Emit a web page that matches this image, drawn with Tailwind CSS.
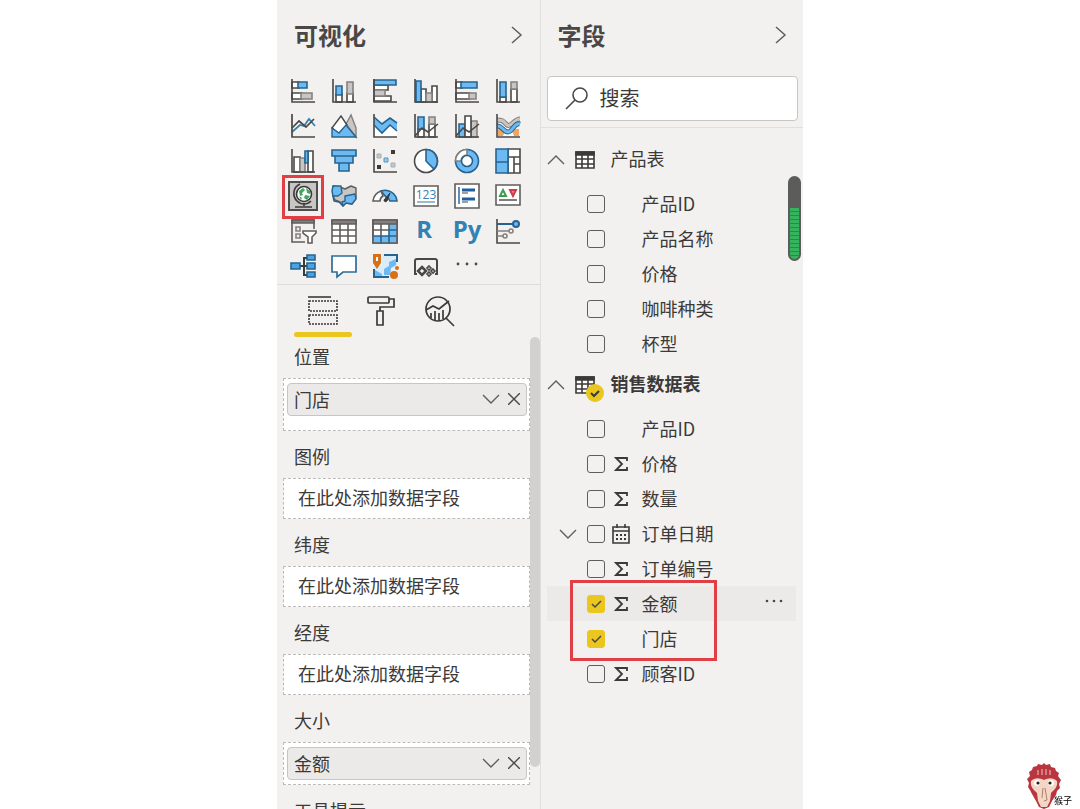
<!DOCTYPE html>
<html lang="zh-CN">
<head>
    <meta charset="UTF-8">
    <meta name="viewport" content="width=device-width, initial-scale=1.0">
    <title>可视化 / 字段</title>

    <!-- Tailwind CSS for styling -->
    <script src="https://cdn.jsdelivr.net/npm/@tailwindcss/browser@4"></script>
</head>
<body class="bg-white font-['Noto_Sans_CJK_SC',sans-serif] text-lg text-[#3b3a39]">

    <div class="mx-auto flex h-screen max-w-[526px] overflow-hidden bg-[#f2f1f0]">

        <!-- Visualizations pane -->
        <section class="flex flex-1 flex-col border-r border-[#e0dfde]">
            <header class="flex h-[73px] shrink-0 items-center justify-between pr-[17px] pb-1 pl-[17px]">
                <h1 class="text-2xl font-bold text-[#4a4846]">可视化</h1>
                <button aria-label="折叠可视化">
                    <svg class="h-5 w-3" viewBox="0 0 12 20" fill="none" stroke="#605e5c" stroke-width="1.5"><path d="M1 2l9 8-9 8"/></svg>
                </button>
            </header>

            <!-- Chart type gallery -->
            <div class="grid shrink-0 auto-rows-[35px] grid-cols-6 place-items-center border-b border-[#dddcdb] pr-[11px] pl-[6px] pb-px">
                <button aria-label="堆积条形图">
                    <svg class="size-6 overflow-visible" viewBox="0 0 24 24" fill="#fff" stroke="#4a4846" stroke-width="1.6">
                        <path d="M1 3h7v6H1zM1 14h10v6H1z"/><path fill="#6db9f2" stroke="#26648f" d="M7 3h9v6H7z"/><path fill="#c8c6c4" stroke="#85807d" d="M10 14h11v6H10z"/><path fill="none" d="M1 0v23h23"/>
                    </svg>
                </button>
                <button aria-label="堆积柱形图">
                    <svg class="size-6 overflow-visible" viewBox="0 0 24 24" fill="#fff" stroke="#4a4846" stroke-width="1.6">
                        <path d="M4 15h6v8H4zM15 14h6v9h-6z"/><path fill="#6db9f2" stroke="#26648f" d="M4 7h6v9H4z"/><path fill="#c8c6c4" stroke="#85807d" d="M15 3h6v12h-6z"/><path fill="none" d="M1 0v23h23"/>
                    </svg>
                </button>
                <button aria-label="簇状条形图">
                    <svg class="size-6 overflow-visible" viewBox="0 0 24 24" fill="#fff" stroke="#4a4846" stroke-width="1.6">
                        <path d="M1 6h14v5H1zM1 17h17v5H1z"/><path fill="#c8c6c4" stroke="#85807d" d="M1 11h11v6H1z"/><path fill="#6db9f2" stroke="#26648f" d="M1 1h22v5H1z"/><path fill="none" d="M1 0v23h23"/>
                    </svg>
                </button>
                <button aria-label="簇状柱形图">
                    <svg class="size-6 overflow-visible" viewBox="0 0 24 24" fill="#fff" stroke="#4a4846" stroke-width="1.6">
                        <path d="M7 10h5v13H7zM18 7h5v16h-5z"/><path fill="#c8c6c4" stroke="#85807d" d="M12 14h6v9h-6z"/><path fill="#6db9f2" stroke="#26648f" d="M2 2h5v21H2z"/><path fill="none" d="M1 0v23h23"/>
                    </svg>
                </button>
                <button aria-label="百分比堆积条形图">
                    <svg class="size-6 overflow-visible" viewBox="0 0 24 24" fill="#fff" stroke="#4a4846" stroke-width="1.6">
                        <path d="M1 3h6v6H1zM1 14h14v6H1z"/><path fill="#6db9f2" stroke="#26648f" d="M6 3h16v6H6z"/><path fill="#c8c6c4" stroke="#85807d" d="M14 14h7v6h-7z"/><path fill="none" d="M1 0v23h23"/>
                    </svg>
                </button>
                <button aria-label="百分比堆积柱形图">
                    <svg class="size-6 overflow-visible" viewBox="0 0 24 24" fill="#fff" stroke="#4a4846" stroke-width="1.6">
                        <path d="M4 18h6v5H4zM15 10h6v13h-6z"/><path fill="#6db9f2" stroke="#26648f" d="M4 3h6v15H4z"/><path fill="#c8c6c4" stroke="#85807d" d="M15 3h6v7h-6z"/><path fill="none" d="M1 0v23h23"/>
                    </svg>
                </button>

                <button aria-label="折线图">
                    <svg class="size-6 overflow-visible" viewBox="0 0 24 24" fill="none" stroke="#4a4846" stroke-width="1.7">
                        <path stroke="#3480a8" d="M1 18l8-7 4 1 5-7 6 7"/><path d="M1 14l7-7 7 6 8-8"/><path d="M1 0v23h23"/>
                    </svg>
                </button>
                <button aria-label="分区图">
                    <svg class="size-6 overflow-visible" viewBox="0 0 24 24" stroke-width="1.4">
                        <path fill="#c8c6c4" stroke="#85807d" d="M14 10l5-9 5 13v9z"/><path fill="#fff" stroke="#4a4846" d="M0 14L9 2l6 9-8 9z"/><path fill="#6db9f2" stroke="#26648f" d="M0 14l7 5 7-8 10 12H0z"/>
                    </svg>
                </button>
                <button aria-label="堆积面积图">
                    <svg class="size-6 overflow-visible" viewBox="0 0 24 24" stroke-width="1.6">
                        <path fill="#fff" d="M1 11l8 8 8-8 7 6v6H1z"/><path fill="#6db9f2" d="M1 3l8 7 8-6 7 5v8l-7-6-8 8-8-8z"/><path fill="none" stroke="#26648f" d="M1 3l8 7 8-6 7 5M1 11l8 8 8-8 7 6"/><path fill="none" stroke="#4a4846" d="M1 0v23h23"/>
                    </svg>
                </button>
                <button aria-label="折线和堆积柱形图">
                    <svg class="size-6 overflow-visible" viewBox="0 0 24 24" fill="#fff" stroke="#4a4846" stroke-width="1.6">
                        <path d="M4 15h6v8H4zM15 10h6v13h-6z"/><path fill="#6db9f2" stroke="#26648f" d="M4 3h6v12H4z"/><path fill="#c8c6c4" stroke="#85807d" d="M15 3h6v7h-6z"/><path fill="none" d="M1 0v23h23M1 22l7-8 6 4 10-8"/>
                    </svg>
                </button>
                <button aria-label="折线和簇状柱形图">
                    <svg class="size-6 overflow-visible" viewBox="0 0 24 24" fill="#fff" stroke="#4a4846" stroke-width="1.6">
                        <path fill="#6db9f2" stroke="#26648f" d="M4 10h6v13H4z"/><path fill="#c8c6c4" stroke="#85807d" d="M16 7h6v16h-6z"/><path d="M10 2h6v21h-6z"/><path fill="none" d="M1 0v23h23M1 22l7-8 6 4 10-8"/>
                    </svg>
                </button>
                <button aria-label="功能区图表">
                    <svg class="size-6 overflow-visible" viewBox="0 0 24 24" fill="none">
                        <path fill="#f0a662" d="M2 15h21v7H2z"/><path fill="#fff" d="M7 22l3-7h5l3 7z"/>
                        <path stroke="#85807d" stroke-width="5" d="M1 6c6 0 6 1 10 5 4 3 7-6 13-6"/><path stroke="#c8c6c4" stroke-width="3" d="M1 6c6 0 6 1 10 5 4 3 7-6 13-6"/>
                        <path stroke="#26648f" stroke-width="5" d="M1 12c5-1 6 6 11 6s6-10 12-8"/><path stroke="#6db9f2" stroke-width="3" d="M1 12c5-1 6 6 11 6s6-10 12-8"/>
                        <path stroke="#4a4846" stroke-width="1.6" d="M1 0v23h23"/>
                    </svg>
                </button>

                <button aria-label="瀑布图">
                    <svg class="size-6 overflow-visible" viewBox="0 0 24 24" fill="#fff" stroke="#4a4846" stroke-width="1.6">
                        <path d="M3 8h6v15H3zM17 2h5v21h-5z"/><path fill="#c8c6c4" stroke="#85807d" d="M9 9h5v14H9z"/><path fill="#6db9f2" stroke="#26648f" d="M14 2h3v12h-3z"/><path fill="none" d="M1 0v23h23"/>
                    </svg>
                </button>
                <button aria-label="漏斗图">
                    <svg class="size-6 overflow-visible" viewBox="0 0 24 24" fill="#6db9f2" stroke="#26648f" stroke-width="1.6">
                        <path d="M0 1h24v6H0zM3 7h18v7H3zM7 14h10v8H7z"/>
                    </svg>
                </button>
                <button aria-label="散点图">
                    <svg class="size-6 overflow-visible" viewBox="0 0 24 24" stroke-width="1">
                        <path fill="#3b3a39" d="M18 1h4v4h-4zM4 16h4v4H4z"/><path fill="#c8c6c4" stroke="#a3b0bb" d="M4 5h4v4H4zM18 14h4v4h-4z"/><path fill="#9acbee" stroke="#5d92b8" d="M11 9h4v4h-4z"/><path fill="none" stroke="#4a4846" stroke-width="1.6" d="M1 0v23h23"/>
                    </svg>
                </button>
                <button aria-label="饼图">
                    <svg class="size-6 overflow-visible" viewBox="0 0 24 24" stroke-width="1.6">
                        <circle cx="12" cy="12" r="11.5" fill="#fff" stroke="#4a4846"/><path fill="#6db9f2" stroke="#26648f" d="M12 .5V12l8 8A11.5 11.5 0 0 0 12 .5z"/>
                    </svg>
                </button>
                <button aria-label="环形图">
                    <svg class="size-6 overflow-visible" viewBox="0 0 24 24" stroke-width="1.6">
                        <circle cx="12" cy="12" r="11.5" fill="#6db9f2" stroke="#26648f"/><path fill="#fff" stroke="#85807d" d="M12 .5V6a6 6 0 0 0-6 6H.5A11.5 11.5 0 0 1 12 .5z"/><circle cx="12" cy="12" r="5.5" fill="#fff" stroke="#26648f"/>
                    </svg>
                </button>
                <button aria-label="树状图">
                    <svg class="size-6 overflow-visible" viewBox="0 0 24 24" fill="#fff" stroke="#4a4846" stroke-width="1.6">
                        <path d="M12 0h12v24H12z"/><path d="M12 8h12M18 15h6M18 8v16"/><path fill="#6db9f2" stroke="#26648f" d="M0 0h12v13H0zM0 13h12v11H0z"/>
                    </svg>
                </button>

                <button aria-label="地图" class="relative grid size-[30px] place-items-center border-2 border-[#4f4d4b] bg-[#c8c6c4]">
                    <svg class="size-6 overflow-visible" viewBox="0 0 24 24" fill="none" stroke="#3b3a39" stroke-width="1.6">
                        <circle cx="13" cy="10" r="7.5" fill="#fff"/>
                        <path fill="#42a561" stroke="none" d="M8 7l4-3 2 2-3 3 1 2-3 1zM15 4l4 3v3l-3-1zM14 11l5 1-3 4-3-2zM8 12l3 2-1 2z"/>
                        <path d="M9 0C2 3 1 12 6 17c4 4 10 4 14 0M13 19v3M4 23h17"/>
                    </svg>
                    <span class="pointer-events-none absolute -inset-x-[8px] -top-[8px] -bottom-[10px] border-[3px] border-[#e04045]"></span>
                </button>
                <button aria-label="着色地图">
                    <svg class="size-6 overflow-visible" viewBox="0 0 24 24" stroke-width="1.4" stroke-linejoin="round">
                        <path fill="#c8c6c4" stroke="#605e5c" d="M1 2l7 1 5 2 6-3 5 2v10l-4 6-6-1-3 3-3-4-5-2-2-4z"/><path fill="#6db9f2" stroke="#26648f" d="M1 2h8l1 7-4 3H1L0 7zM13 12l10-2 1 5-4 5-6-1-3 3-1-4 3-1z"/><path fill="none" stroke="#26648f" d="M1 12l1 5 5 1 4 4"/>
                    </svg>
                </button>
                <button aria-label="仪表">
                    <svg class="size-6 overflow-visible" viewBox="0 0 24 24" stroke-width="1.6">
                        <path fill="#6db9f2" stroke="#26648f" d="M8 7a12 12 0 0 1 16 10h-7a6 6 0 0 0-4-4z"/><path fill="#fff" stroke="#605e5c" d="M0 17A12 12 0 0 1 8 7l2 5a6 6 0 0 0-3 5z"/><path fill="#3b3a39" stroke="#3b3a39" stroke-width="1" d="M17 9l-6 7c0 2 2 2 3 1z"/>
                    </svg>
                </button>
                <button aria-label="卡片图">
                    <svg class="size-6 overflow-visible" viewBox="0 0 24 24" fill="#fff" stroke="#605e5c" stroke-width="1.6">
                        <path d="M0 2h24v20H0z"/><text x="12" y="15" font-family="Open Sans, sans-serif" font-size="12" text-anchor="middle" fill="#3480b8" stroke="none">123</text><path stroke="#85a8bd" d="M3 18h18"/>
                    </svg>
                </button>
                <button aria-label="多行卡">
                    <svg class="size-6 overflow-visible" viewBox="0 0 24 24" fill="none" stroke="#605e5c" stroke-width="1.6">
                        <path fill="#fff" d="M0 0h24v24H0z"/><path stroke="#2f74ac" d="M4 3v17"/><path stroke="#1f5f9f" stroke-width="3" d="M7 6h13M7 15h13"/><path stroke="#85807d" d="M7 9h6M7 18h6"/>
                    </svg>
                </button>
                <button aria-label="KPI">
                    <svg class="size-6 overflow-visible" viewBox="0 0 24 24" fill="none" stroke="#605e5c" stroke-width="1.6">
                        <path fill="#fff" d="M0 1h24v20H0z"/><path stroke="#3f9d4f" stroke-width="2" d="M4 12l3-6 3 6z"/><path fill="#e58a92" stroke="#d6384a" stroke-width="2" d="M14 6h6l-3 6z"/><path d="M3 16h18"/>
                    </svg>
                </button>

                <button aria-label="切片器">
                    <svg class="size-6 overflow-visible" viewBox="0 0 24 24" fill="none" stroke="#605e5c" stroke-width="1.6">
                        <path d="M14 23H1V1h22v9"/><path fill="#85807d" d="M1 1h22v3H1z"/><path stroke="#85807d" d="M5 8h4v4H5zM5 15h4v4H5z"/><path fill="#fff" d="M12 12h13v2l-4 4v6h-4v-6l-5-4z"/>
                    </svg>
                </button>
                <button aria-label="表">
                    <svg class="size-6 overflow-visible" viewBox="0 0 24 24" fill="#fff" stroke="#605e5c" stroke-width="1.6">
                        <path d="M0 1h24v23H0z"/><path fill="#85807d" d="M0 1h24v4H0z"/><path d="M0 11h24M0 17h24M8 5v19M16 5v19"/>
                    </svg>
                </button>
                <button aria-label="矩阵">
                    <svg class="size-6 overflow-visible" viewBox="0 0 24 24" fill="none" stroke="#605e5c" stroke-width="1.6">
                        <path fill="#fff" d="M0 1h24v23H0z"/><path fill="#6db9f2" stroke="none" d="M16 5h8v19H0v-7h16z"/><path fill="#85807d" d="M0 1h24v4H0z"/><path d="M0 11h16M8 5v12M16 5v6"/><path stroke="#26648f" d="M0 17h24M16 11h8M8 17v7M16 11v13"/><path d="M0 1v23h24V1"/>
                    </svg>
                </button>
                <button aria-label="R 脚本" class="pr-1 pb-[3px] font-['Open_Sans',sans-serif] text-2xl leading-6 font-bold text-[#3382b5]">R</button>
                <button aria-label="Python" class="pb-[3px] font-['Open_Sans',sans-serif] text-2xl leading-6 font-bold text-[#3382b5]">Py</button>
                <button aria-label="关键影响者">
                    <svg class="size-6 overflow-visible" viewBox="0 0 24 24" fill="none" stroke="#4a4846" stroke-width="1.6">
                        <path d="M1 0v24h23"/><path stroke="#26648f" stroke-width="2" d="M1 5h16"/><circle cx="20" cy="5" r="3" fill="#6db9f2" stroke="#26648f" stroke-width="2"/><path stroke="#85807d" d="M1 12h12M1 17h6"/><circle cx="15" cy="12" r="2" stroke="#85807d"/><circle cx="9" cy="17" r="2" stroke="#85807d"/>
                    </svg>
                </button>

                <button aria-label="分解树">
                    <svg class="size-6 overflow-visible" viewBox="0 0 24 24" fill="#4ba3e3" stroke="#26648f" stroke-width="1.6">
                        <path fill="none" stroke="#3b3a39" stroke-width="2" d="M8 12h8M16 4h-3v17h3"/><path d="M0 9h9v6H0zM16 1h8v5h-8zM16 9h8v6h-8zM16 18h8v5h-8z"/>
                    </svg>
                </button>
                <button aria-label="问答">
                    <svg class="size-6 overflow-visible" viewBox="0 0 24 24" fill="#fff" stroke="#2d6e96" stroke-width="1.7">
                        <path d="M0 2h24v16H11l-6 5v-5H0z"/>
                    </svg>
                </button>
                <button aria-label="ArcGIS 地图">
                    <svg class="size-6 overflow-visible" viewBox="0 0 24 24" fill="none">
                        <path fill="#d8ecfa" d="M9 0h15v14h-6v9H1V12h8z"/><path fill="#6db9f2" d="M11 21v-6l5-3V8l7-3v6l-5 3-1 7zM2 16l7 4v3H2z"/><path stroke="#26648f" stroke-width="2" d="M11 1h13v7M1 15v8h15"/><path fill="#d87018" d="M0 0h8v9l-4 6-4-6z"/><path fill="#fff" d="M3 3h2v4H3z"/><circle cx="21" cy="21" r="4" fill="#d87018"/><circle cx="24" cy="14" r="2" fill="#d87018"/>
                    </svg>
                </button>
                <button aria-label="Power Apps">
                    <svg class="size-6 overflow-visible" viewBox="0 0 24 24" fill="none" stroke="#4a4846" stroke-width="2">
                        <path d="M3 20H1V7q0-2 2-2h18q2 0 2 2v13h-2"/><path stroke-width="2.5" d="M8 13l4 4-4 4-4-4z"/><path stroke-width="1.6" d="M15 12l2 2-2 2-2-2zM19 15l2 2-2 2-2-2zM15 18l2 2-2 2-2-2z"/>
                    </svg>
                </button>
                <button aria-label="更多视觉对象">
                    <svg class="size-6" viewBox="0 0 24 24" fill="#4a4846"><circle cx="3" cy="10" r="1.4"/><circle cx="12" cy="10" r="1.4"/><circle cx="21" cy="10" r="1.4"/></svg>
                </button>
            </div>

            <!-- Fields / Format / Analytics tabs -->
            <nav class="flex shrink-0 pl-[17px]">
                <button aria-label="字段" class="flex h-[52px] w-[58px] flex-col items-center justify-between pt-[10px]">
                    <svg class="size-8" viewBox="0 0 32 32" fill="none" stroke="#3b3a39" stroke-width="1.6">
                        <path d="M1 2h23"/><path stroke-dasharray="2 1" d="M2 6h28v10H2zM2 20h28v9H2z"/>
                    </svg>
                    <span class="h-[5px] w-full rounded-full bg-[#eac61f]"></span>
                </button>
                <button aria-label="格式" class="flex h-[52px] w-[58px] flex-col items-center pt-[10px]">
                    <svg class="size-8" viewBox="0 0 32 32" fill="none" stroke="#3b3a39" stroke-width="1.7">
                        <rect x="3" y="2" width="21" height="6" rx="1"/><path d="M24 4h5v8H15v4M12 16h6v14h-6z"/>
                    </svg>
                </button>
                <button aria-label="分析" class="flex h-[52px] w-[58px] flex-col items-center pt-[10px]">
                    <svg class="size-8" viewBox="0 0 32 32" fill="none" stroke="#3b3a39" stroke-width="1.7">
                        <circle cx="15" cy="14" r="12"/><path d="M23 23l8 8M3 15l7-4 6 3 10-8M8 18v5M12 16v9M16 18v8M20 15v9"/>
                    </svg>
                </button>
            </nav>

            <!-- Field wells -->
            <div class="flex min-h-0 flex-1 overflow-hidden">
                <div id="wells" class="flex flex-1 flex-col gap-[6px] pl-[6px]"></div>
                <div class="h-[430px] w-[10px] rounded-full bg-[#d2d1d0]"></div>
            </div>
        </section>

        <!-- Fields pane -->
        <section class="relative flex flex-1 flex-col">
            <header class="flex h-[73px] shrink-0 items-center justify-between pr-4 pb-1 pl-[17px]">
                <h1 class="text-2xl font-bold text-[#4a4846]">字段</h1>
                <button aria-label="折叠字段">
                    <svg class="h-5 w-3" viewBox="0 0 12 20" fill="none" stroke="#605e5c" stroke-width="1.5"><path d="M1 2l9 8-9 8"/></svg>
                </button>
            </header>

            <div class="shrink-0 border-b border-[#e0dfde] pt-[3px] pr-[5px] pb-[6px] pl-[6px]">
                <label class="flex h-[45px] items-center gap-[11px] rounded-sm border border-[#c8c6c4] bg-white pb-[2px] pl-[17px]">
                    <svg class="size-6 shrink-0" viewBox="0 0 24 24" fill="none" stroke="#4a4846" stroke-width="1.6" aria-hidden="true"><circle cx="15" cy="9" r="7"/><path d="M10 14l-9 9"/></svg>
                    <input type="text" aria-label="搜索" placeholder="搜索" class="w-full min-w-0 text-xl outline-none placeholder:text-[#3b3a39]">
                </label>
            </div>

            <div id="tables" class="pt-2"></div>

            <!-- Level meter -->
            <div class="absolute top-[176px] right-[2px] flex h-[85px] w-[13px] flex-col overflow-hidden rounded-full border-2 border-[#5c5c5a] bg-[#5c5c5a]">
                <div class="mt-[30px] flex-1 bg-[repeating-linear-gradient(#35b35f_0_3px,#2b8a4a_3px_4px)]"></div>
            </div>
        </section>
    </div>

    <!-- Watermark -->
    <div class="fixed right-2 bottom-0 flex items-end">
        <svg class="h-[46px] w-9" viewBox="0 0 36 46">
            <path fill="#b9353f" d="M18 0l2 2 4-1 1 3 4 1 1 3 3 2-1 3 3 4-2 4 1 4-3 3-1 4-4 6-3 6-5 2-5-2-3-6-4-7-2-4-2-3 1-4-2-4 3-3-1-4 3-2 1-3 4-1 1-2 4 1z"/>
            <path fill="#f5d5c4" d="M5 18c4-4 9-3 13-1 4-2 9-3 13 1 1 6-3 9-6 12l-1 8-3 6h-6l-3-6-1-8c-3-3-7-6-6-12z"/>
            <path fill="none" stroke="#f3c5bf" stroke-width="1" d="M12 7v5M16 6v6M20 6v6M24 7v5"/>
            <circle cx="11" cy="20" r="3" fill="#fff"/><circle cx="25" cy="20" r="3" fill="#fff"/><circle cx="12" cy="20" r="1.6" fill="#222"/><circle cx="24" cy="20" r="1.6" fill="#222"/>
            <path fill="none" stroke="#9a6a58" stroke-width=".8" d="M17 25l-1 10M19 25l2 12-3 1"/>
        </svg>
        <span class="-ml-2 text-[9px] leading-4 text-black">猴子</span>
    </div>

    <script>
        // --- DATA ---
        const wells = [
            { name: '位置', field: '门店', tall: true },
            { name: '图例' },
            { name: '纬度' },
            { name: '经度' },
            { name: '大小', field: '金额' },
            { name: '工具提示' }
        ];

        const tables = [
            {
                name: '产品表',
                fields: [
                    { name: '产品ID' },
                    { name: '产品名称' },
                    { name: '价格' },
                    { name: '咖啡种类' },
                    { name: '杯型' }
                ]
            },
            {
                name: '销售数据表',
                used: true,
                fields: [
                    { name: '产品ID' },
                    { name: '价格', icon: 'sum' },
                    { name: '数量', icon: 'sum' },
                    { name: '订单日期', icon: 'date' },
                    { name: '订单编号', icon: 'sum' },
                    { name: '金额', icon: 'sum', checked: true, hover: true, marked: true },
                    { name: '门店', checked: true },
                    { name: '顾客ID', icon: 'sum' }
                ]
            }
        ];

        // --- ICONS ---
        const chevronDown = '<svg class="h-3 w-[18px]" viewBox="0 0 18 12" fill="none" stroke="#605e5c" stroke-width="1.4"><path d="M1 2l8 8 8-8"/></svg>';
        const chevronUp = '<svg class="h-3 w-[18px]" viewBox="0 0 18 12" fill="none" stroke="#605e5c" stroke-width="1.4"><path d="M1 10l8-8 8 8"/></svg>';
        const cross = '<svg class="size-3" viewBox="0 0 12 12" fill="none" stroke="#4a4846" stroke-width="1.4"><path d="M0 0l12 12M12 0L0 12"/></svg>';
        const tableIcon = '<svg class="h-[18px] w-5" viewBox="0 0 20 18" fill="#fff" stroke="#3b3a39" stroke-width="1.6"><path d="M1 1h18v16H1z"/><path fill="#3b3a39" d="M1 1h18v3H1z"/><path d="M1 8h18M1 13h18M7 4v13M13 4v13"/></svg>';
        const fieldIcons = {
            sum: '<svg class="h-4 w-[14px]" viewBox="0 0 14 16" fill="none" stroke="#3b3a39" stroke-width="1.8"><path d="M13 5V2H2l6 6-6 6h11v-3"/></svg>',
            date: '<svg class="size-5" viewBox="0 0 20 20" fill="none" stroke="#3b3a39" stroke-width="1.6"><path d="M2 3h16v16H2zM2 7h16M6 0v4M14 0v4"/><path stroke-width="2" stroke-dasharray="2 2" d="M5 11h10M5 15h10"/></svg>'
        };

        // --- RENDER ---
        document.getElementById('wells').innerHTML = wells.map(well => `
            <div>
                <h2 class="flex h-[41px] items-center pb-1 pl-[11px]">${well.name}</h2>
                <div class="${well.tall ? 'min-h-[53px]' : 'min-h-[41px]'} border border-dashed border-[#bdbbb9] bg-white ${well.field ? 'py-1 pr-[2px] pl-[3px]' : 'flex items-center px-[14px] pb-1'}">
                    ${well.field ? `
                    <div class="flex h-[33px] items-center rounded-sm border border-[#c8c6c4] bg-[#ebeae9] pr-[6px] pb-[2px] pl-[6px]">
                        <span class="flex-1">${well.field}</span>
                        <button aria-label="${well.field} 选项" class="mr-2">${chevronDown}</button>
                        <button aria-label="移除 ${well.field}">${cross}</button>
                    </div>` : '<span>在此处添加数据字段</span>'}
                </div>
            </div>
        `).join('');

        document.getElementById('tables').innerHTML = tables.map((table, t) => `
            <div>
                <h2 class="flex h-[50px] items-center pb-[3px] pl-[6px] ${table.used ? 'font-bold' : ''}">
                    <button aria-label="折叠 ${table.name}" class="mr-[10px]">${chevronUp}</button>
                    <span class="relative mr-4">
                        ${tableIcon}
                        ${table.used ? '<svg class="absolute top-2 left-[11px] size-[18px]" viewBox="0 0 18 18"><circle cx="9" cy="9" r="9" fill="#eac61f"/><path fill="none" stroke="#3b3a39" stroke-width="2" d="M5 9l3 3 5-5"/></svg>' : ''}
                    </span>
                    <span class="pb-[3px]">${table.name}</span>
                </h2>
                <ul>
                    ${table.fields.map((field, f) => `
                    <li class="relative mr-[7px] ml-[6px] flex h-[35px] items-center ${field.hover ? 'bg-[#ebeae9]' : ''}">
                        <span class="flex w-10 items-center pl-3">${field.icon === 'date' ? `<button aria-label="展开 ${field.name}">${chevronDown}</button>` : ''}</span>
                        <span class="relative size-[18px]">
                            <input type="checkbox" id="field-${t}-${f}" ${field.checked ? 'checked' : ''} class="peer block size-[18px] appearance-none rounded-[3px] border border-[#605e5c] checked:border-[#eac61f] checked:bg-[#eac61f]">
                            <svg class="pointer-events-none invisible absolute inset-0 size-[18px] peer-checked:visible" viewBox="0 0 18 18" fill="none" stroke="#4a4846" stroke-width="1.5"><path d="M5 9l3 3 6-6"/></svg>
                        </span>
                        <label for="field-${t}-${f}" class="flex flex-1 items-center">
                            <span class="flex w-[37px] justify-center pr-[5px]">${fieldIcons[field.icon] || ''}</span>
                            <span class="pb-[2px]">${field.name}</span>
                        </label>
                        ${field.hover ? '<button aria-label="更多选项" class="mr-3"><svg class="h-5 w-5" viewBox="0 0 20 20" fill="#4a4846"><circle cx="3" cy="7" r="1.3"/><circle cx="10" cy="7" r="1.3"/><circle cx="17" cy="7" r="1.3"/></svg></button>' : ''}
                        ${field.marked ? '<span class="pointer-events-none absolute -top-[6px] left-[23px] h-[81px] w-[147px] border-[3px] border-[#e04045]"></span>' : ''}
                    </li>
                    `).join('')}
                </ul>
            </div>
        `).join('');
    </script>
</body>
</html>
